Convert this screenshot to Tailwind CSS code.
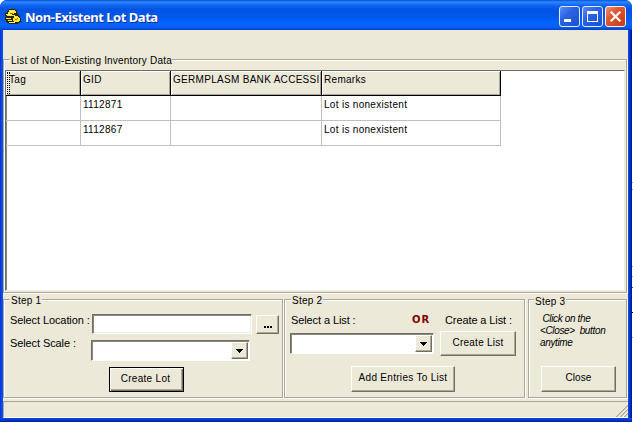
<!DOCTYPE html>
<html lang="en">
<head>
<meta charset="utf-8">
<title>Non-Existent Lot Data</title>
<script src="https://cdn.jsdelivr.net/npm/@tailwindcss/browser@4"></script>
</head>
<body class="w-[633px] h-[423px] overflow-hidden bg-white font-['Liberation_Sans',Arial,sans-serif] text-[10px] leading-[14px] text-black flex">
<div class="relative w-[632px] h-[422px] shrink-0 flex flex-col rounded-t-[7px] overflow-hidden bg-[linear-gradient(to_right,#0831d9_0px,#0a50e8_2px,#0a50e8_628px,#0a48e0_629px,#0030c0_630px,#00138c_632px)]">
  <!-- Title bar -->
  <header class="h-[30px] shrink-0 flex items-center pl-[5px] pr-[6px] bg-[linear-gradient(to_bottom,#0a4fd0_0px,#2f86ff_2px,#1268f0_5px,#0054e3_9px,#0058ec_17px,#0465ff_24px,#0460fa_27px,#0041c4_30px)]">
    <svg class="w-4 h-4 mt-[3px]" viewBox="0 0 16 16" shape-rendering="crispEdges">
      <path d="M4 0h7v1h1v3h1v2h1v1h1v2h1v4h-1v1h-2v1H4v-1H2v-1H1v-2H0V8h1V7H0V4h2V2h1V1h1z" fill="#2b2600"/>
      <path d="M4 1h6v1h1v2H9v1H3V3h1zM1 5h2v1h7v1H2V6H1zM1 9h5v1H1zM2 11h5v1H3zM9 7h4v1h1v1h1v3h-1v1H9v-1H8V9h1z" fill="#ffe629"/>
      <path d="M5 2h3v1H5zM3 5h4v1H3zM10 8h2v1h-2zM4 13h6v1H4z" fill="#fff79a"/>
      <path d="M10 10h2v1h-2zM12 9h1v1h-1zM5 4h3v1H5z" fill="#8a7200"/>
    </svg>
    <h1 class="ml-[4px] mt-[4px] font-['Noto_Sans',sans-serif] font-bold text-[13px] leading-[18px] text-white whitespace-nowrap tracking-[-0.47px] [text-shadow:1px_1px_0_#0a2f9a]">Non-Existent Lot Data</h1>
    <div class="ml-auto mt-[3px] flex gap-[2px]">
      <svg class="w-[21px] h-[21px]" viewBox="0 0 21 21"><defs><linearGradient id="b" x1="0" y1="0" x2="1" y2="1"><stop offset="0" stop-color="#5d8ff5"/><stop offset=".4" stop-color="#2a62e4"/><stop offset="1" stop-color="#1a4fcf"/></linearGradient></defs><rect x=".5" y=".5" width="20" height="20" rx="2.5" fill="url(#b)" stroke="#e4ecff"/><path d="M5 13h7v3H5z" fill="#fff"/></svg>
      <svg class="w-[21px] h-[21px]" viewBox="0 0 21 21"><rect x=".5" y=".5" width="20" height="20" rx="2.5" fill="url(#b)" stroke="#e4ecff"/><path d="M5 5h11v11H5zM6 8v7h9V8z" fill="#fff" fill-rule="evenodd"/></svg>
      <svg class="w-[21px] h-[21px]" viewBox="0 0 21 21"><defs><linearGradient id="r" x1="0" y1="0" x2="1" y2="1"><stop offset="0" stop-color="#f0967a"/><stop offset=".4" stop-color="#e0552f"/><stop offset="1" stop-color="#c63a12"/></linearGradient></defs><rect x=".5" y=".5" width="20" height="20" rx="2.5" fill="url(#r)" stroke="#fff0ea"/><path d="M5.7 5.7l9.6 9.6M15.3 5.7l-9.6 9.6" stroke="#fff" stroke-width="2.2"/></svg>
    </div>
  </header>

  <!-- Client area -->
  <main class="ml-[3px] w-[625px] h-[388px] flex flex-col bg-[#ece9d8]">
    <section class="relative mt-[29px] h-[234px] w-[624px] pt-[10px] pl-[1px] border border-[#aca899] shadow-[1px_1px_0_#fff,inset_1px_1px_0_#fff]">
      <h2 class="absolute left-[6px] top-[-5px] h-[12px] leading-[12px] pl-[1px] bg-[#ece9d8] whitespace-nowrap tracking-[0.2px]">List of Non-Existing Inventory Data</h2>
      <div class="w-[620px] h-[221px] bg-white border border-t-[#716f64] border-l-[#716f64] border-r-[#f1efe2] border-b-[#f1efe2] shadow-[inset_1px_0_0_#8a877a]">
        <div class="w-[495px] grid grid-cols-[75px_90px_151px_179px] grid-rows-[25px_25px_25px] whitespace-nowrap [&>div]:border-r [&>div]:border-b [&>div]:border-[#c0c0c0] [&>div]:pl-[2px] [&>div]:overflow-hidden [&>div]:pt-[2px] tracking-[0.3px]">
          <div class="relative bg-[#ece9d8] border-black! shadow-[inset_1px_1px_0_#fff,inset_-1px_-1px_0_#aca899] pl-[3px]!"><i class="absolute left-[1px] top-[1px] w-[3px] h-[22px] border-x border-dotted border-black"></i>Tag</div>
          <div class="bg-[#ece9d8] border-black! shadow-[inset_1px_1px_0_#fff,inset_-1px_-1px_0_#aca899]">GID</div>
          <div class="bg-[#ece9d8] border-black! shadow-[inset_1px_1px_0_#fff,inset_-1px_-1px_0_#aca899]">GERMPLASM BANK ACCESSI</div>
          <div class="bg-[#ece9d8] border-black! shadow-[inset_1px_1px_0_#fff,inset_-1px_-1px_0_#aca899]">Remarks</div>
          <div></div><div>1112871</div><div></div><div>Lot is nonexistent</div>
          <div></div><div>1112867</div><div></div><div>Lot is nonexistent</div>
        </div>
      </div>
    </section>

    <div class="mt-[6px] h-[99px] flex">
      <!-- Step 1 -->
      <section class="relative w-[280px] h-[99px] pt-[14px] pl-[6px] flex flex-col border border-[#aca899] shadow-[1px_1px_0_#fff,inset_1px_1px_0_#fff]">
        <h2 class="absolute left-[6px] top-[-5px] h-[12px] leading-[12px] px-[1px] bg-[#ece9d8] whitespace-nowrap tracking-[0.25px]">Step 1</h2>
        <div class="flex h-[20px]">
          <label class="w-[82px] text-[11px] whitespace-nowrap -mt-px tracking-[-0.1px]">Select Location :</label>
          <div class="w-[160px] h-[20px] bg-white border border-t-[#716f64] border-l-[#716f64] border-r-white border-b-white shadow-[inset_1px_1px_0_#8a877a,inset_-1px_-1px_0_#f1efe2]"></div>
          <button class="ml-[4px] mt-px w-[23px] h-[19px] bg-[#ece9d8] border border-t-white border-l-white border-r-[#716f64] border-b-[#716f64] shadow-[inset_-1px_-1px_0_#aca899] flex items-end justify-center gap-[1px] pb-[5px]"><i class="w-[2px] h-[2px] bg-black"></i><i class="w-[2px] h-[2px] bg-black"></i><i class="w-[2px] h-[2px] bg-black"></i></button>
        </div>
        <div class="flex h-[20px] mt-[6px]">
          <label class="w-[81px] text-[11px] whitespace-nowrap -mt-[4px] tracking-[-0.1px]">Select Scale :</label>
          <div class="w-[159px] h-[21px] bg-white border border-t-[#716f64] border-l-[#716f64] border-r-white border-b-white shadow-[inset_1px_1px_0_#8a877a] flex justify-end p-px">
            <span class="w-[17px] h-[17px] bg-[#ece9d8] border border-t-white border-l-white border-r-[#716f64] border-b-[#716f64] shadow-[inset_-1px_-1px_0_#aca899] flex items-center justify-center"><svg class="w-[7px] h-[4px]" viewBox="0 0 7 4" shape-rendering="crispEdges"><path d="M0 0h7v1H6v1H5v1H4v1H3V3H2V2H1V1H0z"/></svg></span>
          </div>
        </div>
        <button class="ml-[99px] mt-[7px] w-[75px] h-[25px] pb-[2px] pr-[2px] bg-[#ece9d8] border border-black shadow-[inset_1px_1px_0_#fff,inset_-1px_-1px_0_#716f64,inset_-2px_-2px_0_#aca899] tracking-[0.3px]">Create Lot</button>
      </section>
      <!-- Step 2 -->
      <section class="relative ml-[1px] w-[241px] h-[99px] pl-[5px] border border-[#aca899] shadow-[1px_1px_0_#fff,inset_1px_1px_0_#fff]">
        <h2 class="absolute left-[6px] top-[-5px] h-[12px] leading-[12px] px-[1px] bg-[#ece9d8] whitespace-nowrap tracking-[0.25px]">Step 2</h2>
        <div class="flex h-[66px]">
          <div class="w-[143px] pt-[13px]">
            <div class="flex h-[20px]"><label class="w-[121px] ml-px text-[11px] whitespace-nowrap tracking-[-0.1px]">Select a List :</label><b class="font-['DejaVu_Sans',sans-serif] text-[10px] leading-[14px] text-[#800000] tracking-[1px]">OR</b></div>
            <div class="w-[144px] h-[21px] bg-white border border-t-[#716f64] border-l-[#716f64] border-r-white border-b-white shadow-[inset_1px_1px_0_#8a877a] flex justify-end p-px">
              <span class="w-[17px] h-[17px] bg-[#ece9d8] border border-t-white border-l-white border-r-[#716f64] border-b-[#716f64] shadow-[inset_-1px_-1px_0_#aca899] flex items-center justify-center"><svg class="w-[7px] h-[4px]" viewBox="0 0 7 4" shape-rendering="crispEdges"><path d="M0 0h7v1H6v1H5v1H4v1H3V3H2V2H1V1H0z"/></svg></span>
            </div>
          </div>
          <div class="ml-[7px] pt-[13px]">
            <label class="block h-[18px] ml-[5px] text-[11px] whitespace-nowrap tracking-[-0.1px]">Create a List :</label>
            <button class="block w-[76px] h-[25px] pb-[2px] bg-[#ece9d8] border border-t-white border-l-white border-r-[#716f64] border-b-[#716f64] shadow-[inset_-1px_-1px_0_#aca899] tracking-[0.25px]">Create List</button>
          </div>
        </div>
        <button class="block ml-[61px] w-[104px] h-[26px] pb-[2px] whitespace-nowrap bg-[#ece9d8] border border-t-white border-l-white border-r-[#716f64] border-b-[#716f64] shadow-[inset_-1px_-1px_0_#aca899] tracking-[0.3px]">Add Entries To List</button>
      </section>
      <!-- Step 3 -->
      <section class="relative ml-[3px] w-[99px] h-[99px] border border-[#aca899] shadow-[1px_1px_0_#fff,inset_1px_1px_0_#fff]">
        <h2 class="absolute left-[5px] top-[-4px] h-[12px] leading-[12px] px-[1px] bg-[#ece9d8] whitespace-nowrap tracking-[0.25px]">Step 3</h2>
        <p class="h-[66px] pt-[13px] pl-[11px] italic text-[10px] leading-[12px] whitespace-pre tracking-[-0.35px]">&nbsp;Click on the
&lt;Close&gt;  button
anytime</p>
        <button class="block ml-[12px] w-[75px] h-[26px] pb-[2px] bg-[#ece9d8] border border-t-white border-l-white border-r-[#716f64] border-b-[#716f64] shadow-[inset_-1px_-1px_0_#aca899] tracking-[0.1px]">Close</button>
      </section>
    </div>

    <!-- Status bar -->
    <footer class="mt-[3px] h-[17px] flex justify-end items-end border-t border-l border-[#aca899] border-b border-b-white">
      <svg class="w-[13px] h-[13px]" viewBox="0 0 13 13"><path d="M1 13L13 1M5 13l8-8M9 13l4-4" stroke="#aca899" stroke-width="1.5"/><path d="M0 13L13 0M4 13l9-9M8 13l5-5" stroke="#fff" stroke-width=".7"/></svg>
    </footer>
  </main>
  <div class="h-[4px] bg-[linear-gradient(to_bottom,#0a48e0,#0831c8_60%,#001a8c)]"></div>
</div>
<!-- Sliver of the desktop beside the window -->
<div class="w-px h-[423px] flex flex-col items-stretch">
  <i class="mt-[182px] h-px bg-[#9aa6c8]"></i><i class="mt-[6px] h-px bg-[#9aa6c8]"></i><i class="mt-[76px] h-px bg-[#9aa6c8]"></i><i class="mt-[9px] h-px bg-[#9aa6c8]"></i><i class="mt-[10px] h-px bg-[#404a70]"></i><i class="mt-[24px] h-px bg-black"></i><i class="mt-[24px] h-px bg-[#9aa6c8]"></i>
</div>
</body>
</html>
